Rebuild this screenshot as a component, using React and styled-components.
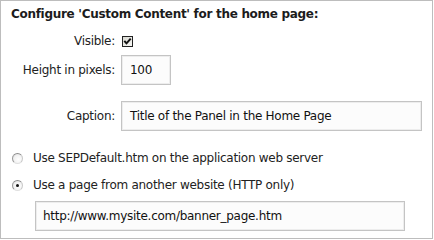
import React from "react";
import styled, { createGlobalStyle } from "styled-components";

const Global = createGlobalStyle`
  html, body { margin: 0; padding: 0; background: #fff; }
  body { font-family: "DejaVu Sans", "Liberation Sans", sans-serif; }
`;

const Panel = styled.div`
  box-sizing: border-box;
  width: 433px;
  height: 239px;
  border: 1px solid #bdbdbd;
  background: #fff;
  padding: 6px 0 0 0;
  color: #222;
  font-size: 12px;
  letter-spacing: -0.28px;
`;

const Heading = styled.h3`
  margin: 0 0 12px 10px;
  font-size: 12px;
  line-height: 15px;
  font-weight: bold;
  letter-spacing: -0.3px;
  color: #1c1c1c;
`;

const FieldRow = styled.div`
  display: grid;
  grid-template-columns: 114px auto;
  column-gap: 6px;
  align-items: center;
  height: ${(p) => p.$h}px;
  margin-top: ${(p) => p.$mt || 0}px;
`;

const Label = styled.label`
  text-align: right;
  line-height: 15px;
  white-space: nowrap;
`;

const TextBox = styled.div`
  box-sizing: border-box;
  width: ${(p) => p.$w}px;
  height: 30px;
  border: 1px solid #c4c4c4;
  box-shadow: inset 0 0 0 1px #ededed;
  background: #fcfcfc;
  padding-left: ${(p) => p.$pl || 8}px;
  display: flex;
  align-items: center;
  color: #111;
  white-space: nowrap;
`;

const CheckBox = styled.span`
  box-sizing: border-box;
  display: inline-flex;
  align-items: center;
  justify-content: center;
  width: 11px;
  height: 11px;
  margin-left: 1px;
  border: 1px solid #222;
  background: linear-gradient(135deg, #d8d8d0, #f8f8f6);
`;

const RadioRow = styled.div`
  display: flex;
  align-items: center;
  gap: 10px;
  height: 16px;
  margin: ${(p) => p.$mt}px 0 0 11px;
  line-height: 15px;
  white-space: nowrap;
`;

const Radio = styled.span`
  box-sizing: border-box;
  flex: none;
  width: 11px;
  height: 11px;
  border-radius: 50%;
  border: 1px solid;
  border-color: #8c8c8c #c8c8c8 #e0e0e0 #9a9a9a;
  background: radial-gradient(circle at 60% 60%, #ffffff 0%, #f2f2f2 55%, #d6d6d6 100%);
  display: flex;
  align-items: center;
  justify-content: center;
  &::after {
    content: "";
    width: 3px;
    height: 3px;
    border-radius: 50%;
    background: #111;
    display: ${(p) => (p.$checked ? "block" : "none")};
  }
`;

const UrlWrap = styled.div`
  margin: 8px 0 0 34px;
`;

export default function App() {
  return (
    <>
      <Global />
      <Panel>
        <Heading>Configure 'Custom Content' for the home page:</Heading>
        <FieldRow $h={14}>
          <Label>Visible:</Label>
          <CheckBox>
            <svg width="9" height="9" viewBox="0 0 9 9">
              <path d="M1.3 3.8 L3.5 6.3 L7.7 1.6" fill="none" stroke="#111" strokeWidth="2" />
            </svg>
          </CheckBox>
        </FieldRow>
        <FieldRow $h={30} $mt={7}>
          <Label>Height in pixels:</Label>
          <TextBox $w={50}>100</TextBox>
        </FieldRow>
        <FieldRow $h={30} $mt={16}>
          <Label>Caption:</Label>
          <TextBox $w={301}>Title of the Panel in the Home Page</TextBox>
        </FieldRow>
        <RadioRow $mt={19}>
          <Radio />
          <span>Use SEPDefault.htm on the application web server</span>
        </RadioRow>
        <RadioRow $mt={11}>
          <Radio $checked />
          <span>Use a page from another website (HTTP only)</span>
        </RadioRow>
        <UrlWrap>
          <TextBox $w={370} $pl={7}>http://www.mysite.com/banner_page.htm</TextBox>
        </UrlWrap>
      </Panel>
    </>
  );
}
